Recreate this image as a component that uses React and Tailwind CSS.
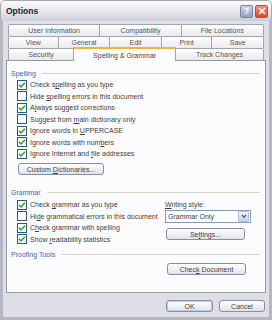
import React from 'react';

const font = { fontFamily: '"Liberation Sans", Arial, sans-serif' };

// renders "a[b]c" style labels: pre, underlined char, post
const Label = ({ parts }) => (
  <span className="whitespace-nowrap">
    {parts[0]}
    <u className="underline-offset-[1px]">{parts[1]}</u>
    {parts[2]}
  </span>
);

const CheckBox = ({ checked, parts }) => (
  <div className="flex items-center gap-[2px] h-[11.5px]">
    <span className="w-[10px] h-[10px] border border-[#2a5a86] bg-white flex items-center justify-center shrink-0">
      {checked && (
        <svg width="8" height="8" viewBox="0 0 8 8">
          <path d="M1 3.8 L3 5.9 L7 1.8" stroke="#2aa12a" strokeWidth="1.5" fill="none" />
        </svg>
      )}
    </span>
    <span className="px-[1px] text-[#3c3c3c]">
      <Label parts={parts} />
    </span>
  </div>
);

const Group = ({ title }) => (
  <div className="flex items-center gap-[6px] h-[11px] text-[#3765c0]">
    <span className="whitespace-nowrap">{title}</span>
    <div className="flex-1 h-px bg-[#d6d6cc]" />
  </div>
);

const Button = ({ children, className = '' }) => (
  <div
    className={`h-[12px] flex items-center justify-center rounded-[3px] border border-[#8390a8] bg-gradient-to-b from-white to-[#e1e1ea] text-[#444] ${className}`}
  >
    {children}
  </div>
);

const Tab = ({ label, w, first }) => (
  <div
    className={`h-full flex items-center justify-center rounded-t-[2px] border-t border-x border-[#a0a6b0] bg-gradient-to-b from-white to-[#e9e9ef] text-[#555] ${first ? '' : '-ml-px'}`}
    style={{ width: w }}
  >
    {label}
  </div>
);

export default function App() {
  const spelling = [
    [true, ['Check s', 'p', 'elling as you type']],
    [false, ['Hide ', 's', 'pelling errors in this document']],
    [true, ['A', 'l', 'ways suggest corrections']],
    [false, ['Suggest from ', 'm', 'ain dictionary only']],
    [true, ['Ignore words in ', 'U', 'PPERCASE']],
    [true, ['Ignore words with num', 'b', 'ers']],
    [true, ['Ignore Internet and ', 'f', 'ile addresses']],
  ];
  const grammar = [
    [true, ['Check ', 'g', 'rammar as you type']],
    [false, ['Hi', 'd', 'e grammatical errors in this document']],
    [true, ['C', 'h', 'eck grammar with spelling']],
    [true, ['Show ', 'r', 'eadability statistics']],
  ];

  return (
    <div className="w-[272px] h-[320px] flex flex-col text-[7px] leading-none overflow-hidden" style={font}>
      {/* Title bar */}
      <div className="h-[21px] flex items-center justify-between pl-[5px] pr-[3px] rounded-t-[5px] border-t border-x border-[#a9a9b5] bg-gradient-to-b from-[#fbfbfd] via-[#e8e8ee] to-[#cdcdd8]">
        <span className="text-[8.5px] font-bold text-[#222]">Options</span>
        <div className="flex gap-[2px]">
          <div className="w-[13px] h-[13px] rounded-[2px] border border-[#7584a0] bg-gradient-to-b from-[#ced7e8] to-[#93a2c0] flex items-center justify-center text-white text-[9px] font-bold">
            ?
          </div>
          <div className="w-[13px] h-[13px] rounded-[2px] border border-[#b0523c] bg-gradient-to-b from-[#f39378] to-[#d8442a] flex items-center justify-center">
            <svg width="8" height="8" viewBox="0 0 8 8">
              <path d="M1 1 L7 7 M7 1 L1 7" stroke="white" strokeWidth="1.6" />
            </svg>
          </div>
        </div>
      </div>

      {/* Body */}
      <div className="flex-1 flex flex-col bg-[#dfdee4] border-x-[3px] border-b-[3px] border-[#b6b6c2] px-[3px]">
        {/* Tabs */}
        <div className="mt-[3px] px-[2px] flex flex-col">
          <div className="flex h-[12px]">
            <Tab label="User Information" w={93} first />
            <Tab label="Compatibility" w={83} />
            <Tab label="File Locations" w={84} />
          </div>
          <div className="flex h-[12px]">
            <Tab label="View" w={51} first />
            <Tab label="General" w={53} />
            <Tab label="Edit" w={53} />
            <Tab label="Print" w={52} />
            <Tab label="Save" w={53} />
          </div>
          <div className="flex h-[12px] items-start">
            <Tab label="Security" w={67} first />
            <div className="relative z-10 -ml-px -mt-px h-[14px] w-[104px] flex items-center justify-center border-t-2 border-t-[#f2b33d] border-x border-x-[#a0a6b0] bg-[#fcfcfe] text-[#444]">
              Spelling &amp; Grammar
            </div>
            <Tab label="Track Changes" w={90} />
          </div>
        </div>

        {/* Panel */}
        <div className="h-[233px] border border-[#919b9c] bg-[#fcfcfe] flex flex-col pl-[4px] pr-[5px] pt-[7px]">
          <Group title="Spelling" />
          <div className="pl-[6px] flex flex-col">
            {spelling.map(([c, p], i) => (
              <CheckBox key={i} checked={c} parts={p} />
            ))}
            <Button className="mt-[3.5px] ml-[1px] w-[86px]">
              <Label parts={['Custom ', 'D', 'ictionaries...']} />
            </Button>
          </div>

          <div className="mt-[11.5px]">
            <Group title="Grammar" />
          </div>
          <div className="mt-[1.5px] flex">
            <div className="pl-[6px] w-[154px] flex flex-col">
              {grammar.map(([c, p], i) => (
                <CheckBox key={i} checked={c} parts={p} />
              ))}
            </div>
            <div className="flex flex-col">
              <div className="h-[11px] flex items-center text-[#3c3c3c]">
                <Label parts={['', 'W', 'riting style:']} />
              </div>
              <div className="h-[13px] w-[86px] border border-[#7f9db9] bg-white flex items-center justify-between">
                <span className="pl-[2px] text-[#3c3c3c]">Grammar Only</span>
                <div className="h-[11px] w-[11px] mr-px rounded-[1px] border border-[#b3c2d9] bg-gradient-to-b from-[#eef2fa] to-[#c6d2e8] flex items-center justify-center">
                  <svg width="6" height="5" viewBox="0 0 6 5">
                    <path d="M1 1 L3 3.3 L5 1" stroke="#4d6185" strokeWidth="1.3" fill="none" />
                  </svg>
                </div>
              </div>
              <Button className="mt-[5px] ml-[1px] w-[79px]">
                <Label parts={['Se', 't', 'tings...']} />
              </Button>
            </div>
          </div>

          <div className="mt-[3.5px]">
            <Group title="Proofing Tools" />
          </div>
          <div className="mt-[3.5px] flex pl-[156px]">
            <Button className="w-[79px]">
              <Label parts={['Chec', 'k', ' Document']} />
            </Button>
          </div>
        </div>

        {/* Dialog buttons */}
        <div className="mt-[7px] flex justify-end gap-[6px] pr-[1px]">
          <Button className="w-[47px] border-[#4068a6] shadow-[inset_0_0_0_1px_#b4cdf0]">OK</Button>
          <Button className="w-[46px]">Cancel</Button>
        </div>
      </div>
    </div>
  );
}
